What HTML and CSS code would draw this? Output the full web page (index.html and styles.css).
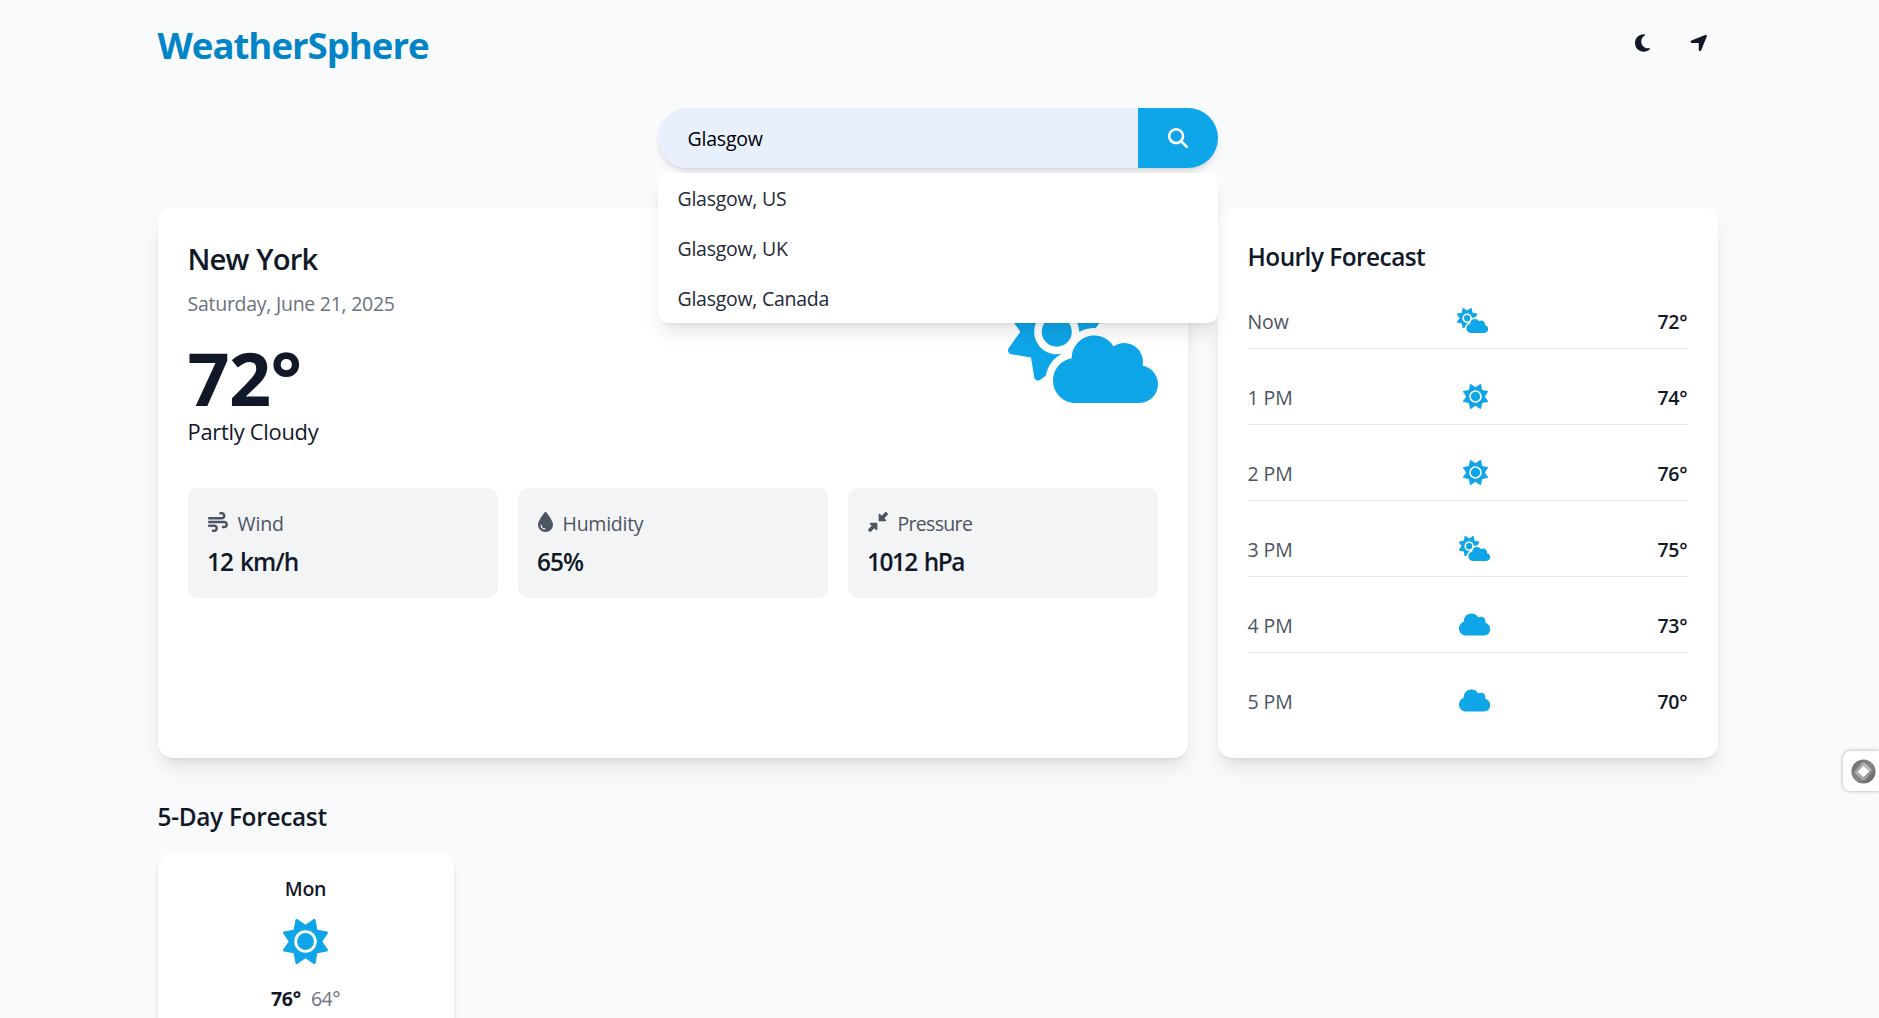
FILE: index.html
```html
<!DOCTYPE html>
<html lang="en">
<head>
<meta charset="utf-8">
<title>WeatherSphere</title>
<link rel="stylesheet" href="styles.css">
</head>
<body>
<svg class="sprite" aria-hidden="true">
  <symbol id="sun" viewBox="0 0 512 512"><path d="M361.5 1.2c5 2.1 8.6 6.6 9.6 11.9L391 121l107.9 19.8c5.3 1 9.8 4.6 11.9 9.6s1.5 10.7-1.6 15.2L446.9 256l62.3 90.3c3.1 4.5 3.7 10.2 1.6 15.2s-6.6 8.6-11.9 9.6L391 391 371.1 498.9c-1 5.3-4.6 9.8-9.6 11.9s-10.7 1.5-15.2-1.6L256 446.9l-90.3 62.3c-4.5 3.1-10.2 3.7-15.2 1.6s-8.6-6.6-9.6-11.9L121 391 13.1 371.1c-5.3-1-9.8-4.6-11.9-9.6s-1.5-10.7 1.6-15.2L65.1 256 2.8 165.7c-3.1-4.5-3.7-10.2-1.6-15.2s6.6-8.6 11.9-9.6L121 121 140.9 13.1c1-5.3 4.6-9.8 9.6-11.9s10.7-1.5 15.2 1.6L256 65.1 346.3 2.8c4.5-3.1 10.2-3.7 15.2-1.6zM160 256a96 96 0 1 1 192 0 96 96 0 1 1 -192 0zm224 0a128 128 0 1 0 -256 0 128 128 0 1 0 256 0z"/></symbol>
  <symbol id="cloud" viewBox="0 0 640 512"><path d="M0 336c0 79.5 64.5 144 144 144H512c70.7 0 128-57.3 128-128c0-61.9-44-113.6-102.4-125.4c4.1-10.7 6.4-22.4 6.4-34.6c0-53-43-96-96-96c-19.7 0-38.1 6-53.3 16.2C367 64.2 315.3 32 256 32C167.6 32 96 103.6 96 192c0 2.7 .1 5.4 .2 8.1C40.2 219.8 0 273.2 0 336z"/></symbol>
  <symbol id="cloud-sun" viewBox="0 0 640 512"><path d="M294.2 1.2c5.1 2.1 8.7 6.7 9.6 12.1l14.1 84.7 84.7 14.1c5.4 .9 10 4.5 12.1 9.6s1.5 10.9-1.6 15.4l-38.5 55c-2.2-.1-4.4-.2-6.7-.2c-23.3 0-45.1 6.2-64 17.1l0-1.1c0-53-43-96-96-96s-96 43-96 96s43 96 96 96c8.1 0 15.9-1 23.4-2.9c-36.6 18.1-63.3 53.1-69.8 94.9l-24.4 17c-4.5 3.2-10.3 3.8-15.4 1.6s-8.7-6.7-9.6-12.1L98.1 317.9 13.4 303.8c-5.4-.9-10-4.5-12.1-9.6s-1.5-10.9 1.6-15.4L52.5 208 2.9 137.2c-3.2-4.5-3.8-10.3-1.6-15.4s6.7-8.7 12.1-9.6L98.1 98.1l14.1-84.7c.9-5.4 4.5-10 9.6-12.1s10.9-1.5 15.4 1.6L208 52.5 278.8 2.9c4.5-3.2 10.3-3.8 15.4-1.6zM144 208a64 64 0 1 1 128 0 64 64 0 1 1 -128 0zM639.9 431.9c0 44.2-35.8 80-80 80l-271.9 0c-53 0-96-43-96-96c0-47.6 34.6-87 80-94.6l0-1.3c0-53 43-96 96-96c34.9 0 65.4 18.6 82.2 46.4c13-9.1 28.8-14.4 45.8-14.4c44.2 0 80 35.8 80 80c0 5.9-.6 11.7-1.9 17.2c37.4 6.7 65.8 39.4 65.8 78.7z"/></symbol>
</svg>

<div class="container">
  <header class="topbar">
    <h1 class="brand">WeatherSphere</h1>
    <div class="actions">
      <button class="icon-btn" aria-label="Toggle theme"><svg class="icon icon-moon" viewBox="0 0 384 512"><path d="M223.5 32C100 32 0 132.3 0 256S100 480 223.5 480c60.6 0 115.5-24.2 155.8-63.4c5-4.9 6.3-12.5 3.1-18.7s-10.1-9.7-17-8.5c-9.8 1.7-19.8 2.6-30.1 2.6c-96.9 0-175.5-78.8-175.5-176c0-65.8 36-123.1 89.3-153.3c6.1-3.5 9.2-10.5 7.7-17.3s-7.3-11.9-14.3-12.5c-6.3-.5-12.6-.8-19-.8z"/></svg></button>
      <button class="icon-btn" aria-label="Use my location"><svg class="icon icon-arrow" viewBox="0 0 448 512"><path d="M429.6 92.1c4.9-11.9 2.1-25.6-7-34.7s-22.8-11.9-34.7-7l-352 144c-14.2 5.8-22.2 20.8-19.3 35.8s16.1 25.8 31.4 25.8H224V432c0 15.3 10.8 28.4 25.8 31.4s30-5.1 35.8-19.3l144-352z"/></svg></button>
    </div>
  </header>

  <div class="search">
    <div class="search-bar">
      <input class="search-input" type="text" value="Glasgow" aria-label="City">
      <button class="search-btn" aria-label="Search"><svg class="icon icon-search" viewBox="0 0 512 512"><path d="M416 208c0 45.9-14.9 88.3-40 122.7L502.6 457.4c12.5 12.5 12.5 32.8 0 45.3s-32.8 12.5-45.3 0L330.7 376c-34.4 25.2-76.8 40-122.7 40C93.1 416 0 322.9 0 208S93.1 0 208 0S416 93.1 416 208zM208 352a144 144 0 1 0 0-288 144 144 0 1 0 0 288z"/></svg></button>
    </div>
    <ul class="suggestions">
      <li class="suggestion">Glasgow, US</li>
      <li class="suggestion">Glasgow, UK</li>
      <li class="suggestion">Glasgow, Canada</li>
    </ul>
  </div>

  <main class="dashboard">
    <section class="card current">
      <div class="current-top">
        <div>
          <h2 class="city">New York</h2>
          <p class="date">Saturday, June 21, 2025</p>
          <p class="temp">72°</p>
          <p class="condition">Partly Cloudy</p>
        </div>
        <svg class="current-icon"><use href="#cloud-sun"/></svg>
      </div>
      <div class="stats">
        <div class="stat">
          <div class="stat-label"><svg class="icon stat-icon" viewBox="0 0 512 512"><path d="M288 32c0 17.7 14.3 32 32 32h32c17.7 0 32 14.3 32 32s-14.3 32-32 32H32c-17.7 0-32 14.3-32 32s14.3 32 32 32H352c53 0 96-43 96-96s-43-96-96-96H320c-17.7 0-32 14.3-32 32zm64 352c0 17.7 14.3 32 32 32h32c53 0 96-43 96-96s-43-96-96-96H32c-17.7 0-32 14.3-32 32s14.3 32 32 32H416c17.7 0 32 14.3 32 32s-14.3 32-32 32H384c-17.7 0-32 14.3-32 32zM128 512h32c53 0 96-43 96-96s-43-96-96-96H32c-17.7 0-32 14.3-32 32s14.3 32 32 32H160c17.7 0 32 14.3 32 32s-14.3 32-32 32H128c-17.7 0-32 14.3-32 32s14.3 32 32 32z"/></svg><span class="wind">Wind</span></div>
          <p class="stat-value">12 km/h</p>
        </div>
        <div class="stat">
          <div class="stat-label"><svg class="icon stat-icon stat-icon-narrow" viewBox="0 0 384 512"><path d="M192 512C86 512 0 426 0 320C0 228.8 130.2 57.7 166.6 11.7C172.6 4.2 181.5 0 191.1 0h1.8c9.6 0 18.5 4.2 24.5 11.7C253.8 57.7 384 228.8 384 320c0 106-86 192-192 192zM96 336c0-8.8-7.2-16-16-16s-16 7.2-16 16c0 61.9 50.1 112 112 112c8.8 0 16-7.2 16-16s-7.2-16-16-16c-44.2 0-80-35.8-80-80z"/></svg><span class="humidity">Humidity</span></div>
          <p class="stat-value">65%</p>
        </div>
        <div class="stat">
          <div class="stat-label"><svg class="icon stat-icon" viewBox="0 0 512 512"><path d="M439 7c9.4-9.4 24.6-9.4 33.9 0l32 32c9.4 9.4 9.4 24.6 0 33.9l-87 87 39 39c6.9 6.9 8.9 17.2 5.2 26.2s-12.5 14.8-22.2 14.8H296c-13.3 0-24-10.7-24-24V72c0-9.7 5.8-18.5 14.8-22.2s19.3-1.7 26.2 5.2l39 39L439 7zM72 272H216c13.3 0 24 10.7 24 24V440c0 9.7-5.8 18.5-14.8 22.2s-19.3 1.7-26.2-5.2l-39-39L73 505c-9.4 9.4-24.6 9.4-33.9 0L7 473c-9.4-9.4-9.4-24.6 0-33.9l87-87L55 313c-6.9-6.9-8.9-17.2-5.2-26.2s12.5-14.8 22.2-14.8z"/></svg><span class="pressure">Pressure</span></div>
          <p class="stat-value stat-value-tight">1012 hPa</p>
        </div>
      </div>
    </section>

    <section class="card hourly">
      <h3 class="section-title">Hourly Forecast</h3>
      <ul class="hours">
        <li class="hour"><span class="hour-label hour-now">Now</span><svg class="hour-icon wide"><use href="#cloud-sun"/></svg><span class="hour-temp">72°</span></li>
        <li class="hour"><span class="hour-label">1 PM</span><svg class="hour-icon"><use href="#sun"/></svg><span class="hour-temp">74°</span></li>
        <li class="hour"><span class="hour-label">2 PM</span><svg class="hour-icon"><use href="#sun"/></svg><span class="hour-temp">76°</span></li>
        <li class="hour"><span class="hour-label">3 PM</span><svg class="hour-icon wide"><use href="#cloud-sun"/></svg><span class="hour-temp">75°</span></li>
        <li class="hour"><span class="hour-label">4 PM</span><svg class="hour-icon wide"><use href="#cloud"/></svg><span class="hour-temp">73°</span></li>
        <li class="hour"><span class="hour-label">5 PM</span><svg class="hour-icon wide"><use href="#cloud"/></svg><span class="hour-temp">70°</span></li>
      </ul>
    </section>
  </main>

  <section class="week">
    <h3 class="week-title">5-Day Forecast</h3>
    <div class="days">
      <article class="day">
        <p class="day-name">Mon</p>
        <svg class="day-icon"><use href="#sun"/></svg>
        <p class="day-temps"><span class="high">76°</span><span class="low">64°</span></p>
      </article>
    </div>
  </section>
</div>

<div class="side-widget">
  <svg class="widget-logo" viewBox="0 0 26 26">
    <defs>
      <linearGradient id="g1" x1="0" y1="0" x2="1" y2="1"><stop offset="0" stop-color="#6a6a6a"/><stop offset=".5" stop-color="#8a8a8a"/><stop offset="1" stop-color="#5e5e5e"/></linearGradient>
      <linearGradient id="g2" x1="0" y1="0" x2="1" y2="0"><stop offset="0" stop-color="#9a9a9a"/><stop offset="1" stop-color="#c8c8c8"/></linearGradient>
      <linearGradient id="g3" x1="1" y1="0" x2="0" y2="0"><stop offset="0" stop-color="#8a8a8a"/><stop offset="1" stop-color="#bdbdbd"/></linearGradient>
    </defs>
    <circle cx="13" cy="13" r="12.6" fill="url(#g1)"/>
    <path d="M3 14 11 4.500Q13 2.800 15 4.500L22 12 19 13 13 7 6 14Z" fill="url(#g2)"/>
    <path d="M23 12 15 21.500Q13 23.200 11 21.500L4 14 7 13 13 19 20 12Z" fill="url(#g3)"/>
    <path d="M13 7 19 13 13 19 7 13Z" fill="#fff"/>
  </svg>
</div>
</body>
</html>
```

FILE: styles.css
```css
*, *::before, *::after { box-sizing: border-box; }

html { font-size: 20px; }

body {
  margin: 0;
  padding-right: 4px;
  height: 1018px;
  overflow: hidden;
  background: #f9fafb;
  background: #f8fafc;
  color: #111827;
  font-family: "Open Sans", "Noto Sans", sans-serif;
  font-size: 19.5px;
  line-height: 30px;
}

h1, h2, h3, p, ul { margin: 0; padding: 0; }
ul { list-style: none; }
button { border: 0; padding: 0; background: none; color: inherit; font: inherit; }
svg { display: block; flex: none; fill: currentColor; }

.sprite { position: absolute; width: 0; height: 0; }
.icon { width: 1rem; height: 1rem; }

.container { max-width: 1600px; margin: 0 auto; padding: 20px; }

.topbar { display: flex; justify-content: space-between; height: 50px; }
.brand { padding-top: 3px; color: #0284c7; font-size: 36.6px; font-weight: 700; line-height: 45px; letter-spacing: -1.02px; }
.actions { display: flex; gap: 20px; align-self: flex-start; }
.icon-btn { display: flex; padding: 13px 10px; }
.icon-moon { width: 15px; }
.icon-arrow { width: 17.5px; }

.search { position: relative; width: 560px; margin: 38px auto 40px; }
.search-bar {
  display: flex; height: 60px; border-radius: 30px; overflow: hidden;
  box-shadow: 0 5px 7.5px -1px rgba(0, 0, 0, .1), 0 2.5px 5px -2.5px rgba(0, 0, 0, .1);
}
.search-input {
  flex: 1; min-width: 0; border: 0; outline: 0; padding: 2px 30px 0;
  background: #e8f0fe; color: #000; font: inherit; letter-spacing: -.2px;
}
.search-btn { display: flex; align-items: center; justify-content: center; width: 80px; background: #0ea5e9; color: #fff; }
.suggestions {
  position: absolute; z-index: 10; top: 65px; left: 0; right: 0;
  background: #fff; border-radius: 10px;
  box-shadow: 0 12.5px 18.75px -3.75px rgba(0, 0, 0, .1), 0 5px 7.5px -5px rgba(0, 0, 0, .1);
}
.suggestion { height: 50px; padding: 11px 20px 9px; color: #1f2937; letter-spacing: -.26px; }

.dashboard { display: grid; grid-template-columns: repeat(3, 1fr); gap: 30px; }
.card {
  padding: 30px; background: #fff; border-radius: 15px;
  box-shadow: 0 12.5px 18.75px -3.75px rgba(0, 0, 0, .1), 0 5px 7.5px -5px rgba(0, 0, 0, .1);
}
.current { grid-column: span 2; }
.current-top { display: flex; justify-content: space-between; align-items: center; height: 210px; }
.city { padding-top: 1px; font-size: 29.25px; font-weight: 600; line-height: 40px; letter-spacing: -.85px; word-spacing: 1px; }
.date { margin-top: 10px; color: #6b7280; line-height: 30px; letter-spacing: -.26px; }
.temp { margin-top: 21px; font-size: 73.8px; font-weight: 700; line-height: 75px; letter-spacing: -.7px; }
.condition { font-size: 21.9px; line-height: 33px; letter-spacing: -.28px; }
.current-icon { width: 150px; height: 120px; color: #0ea5e9; }

.stats { display: grid; grid-template-columns: repeat(3, 1fr); gap: 20px; margin-top: 40px; }
.stat { height: 110px; padding: 20px; background: #f3f4f6; border-radius: 10px; }
.stat-label { display: flex; gap: 10px; height: 35px; color: #4b5563; }
.stat-label span { padding-top: 1px; }
.stat-icon { margin-top: 4px; }
.stat-icon-narrow { width: 15px; }
.wind { letter-spacing: -.1px; }
.humidity { letter-spacing: -.25px; }
.pressure { letter-spacing: -.68px; }
.stat-value { font-size: 24.4px; font-weight: 600; line-height: 38px; letter-spacing: -.95px; word-spacing: 1.500px; }
.stat-value:not(.stat-value-tight) { text-indent: -.5px; }
.stat-value-tight { letter-spacing: -1.55px; word-spacing: 2.5px; text-indent: -.5px; }

.section-title, .week-title { font-size: 24.4px; font-weight: 600; line-height: 35px; }
.section-title { height: 35px; padding-top: 1px; letter-spacing: -.53px; }
.hours { display: grid; gap: 20px; margin-top: 20px; }
.hour {
  display: flex; align-items: center; justify-content: space-between;
  height: 56px; border-bottom: 1px solid #e5e7eb;
}
.hour:last-child { height: 55px; border-bottom: 0; }
.hour-label { width: 45px; padding-top: 2px; color: #4b5563; letter-spacing: -.1px; white-space: nowrap; }
.hour-now { width: 41px; }
.hour-icon { width: 25px; height: 25px; color: #0ea5e9; }
.hour-icon.wide { width: 31.25px; }
.hour-temp { width: 30px; padding-top: 2px; font-weight: 600; letter-spacing: -.3px; }

.week { margin-top: 40px; }
.week-title { padding-top: 1px; letter-spacing: -.3px; }
.days { display: grid; grid-template-columns: repeat(5, 1fr); gap: 20px; margin-top: 19px; }
.day {
  display: flex; flex-direction: column; align-items: center; height: 200px; padding: 21px 20px;
  background: #fff; border-radius: 15px;
  box-shadow: 0 5px 7.5px -1.25px rgba(0, 0, 0, .1), 0 2.5px 5px -2.5px rgba(0, 0, 0, .1);
}
.day-name { font-weight: 600; letter-spacing: -.3px; }
.day-icon { width: 45px; height: 45px; margin: 15px 0 19.5px; color: #0ea5e9; }
.day-temps { display: flex; gap: 10px; }
.high { font-weight: 700; letter-spacing: -.2px; }
.low { color: #6b7280; letter-spacing: -.5px; }

.side-widget {
  position: fixed; top: 751px; right: 0; width: 36px; height: 40px; padding: 7.5px 8px;
  background: #fff; border-radius: 8px 0 0 8px;
  box-shadow: 0 0 4px rgba(0, 0, 0, .3);
}
.widget-logo { width: 25px; height: 25px; }
```
